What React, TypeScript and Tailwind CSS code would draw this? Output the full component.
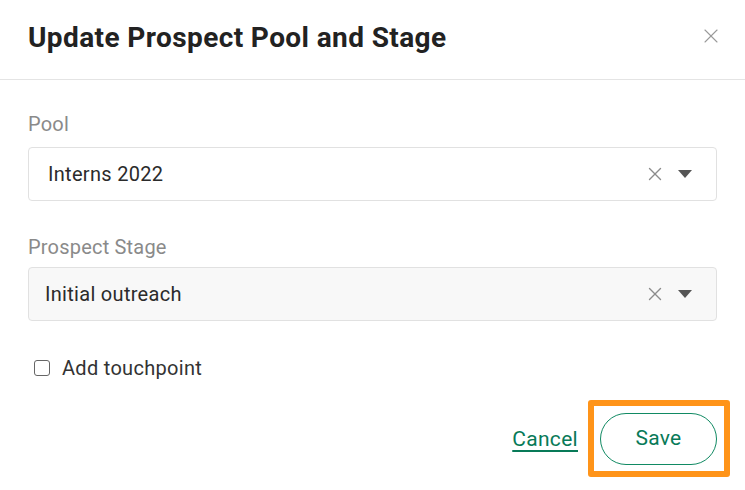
import { X } from 'lucide-react';

function SelectBox({ value, muted }: { value: string; muted?: boolean }) {
  return (
    <div
      className={`h-[54px] flex items-center rounded-[4px] border border-[#e1e1e1] ${
        muted ? 'bg-[#f8f8f8] pl-[16px]' : 'bg-white pl-[19px]'
      } pr-[24px]`}
    >
      <span className="flex-1 text-[20px] text-[#2b2b2b] tracking-[0.3px]">{value}</span>
      <X size={22} strokeWidth={1.5} className="text-[#8c8c8c] mr-[12px]" />
      <svg width="14" height="8" viewBox="0 0 14 8">
        <path d="M0 0 L14 0 L7 8 Z" fill="#555" />
      </svg>
    </div>
  );
}

export default function App() {
  return (
    <div className="w-[745px] h-[490px] bg-white overflow-hidden" style={{ fontFamily: 'Roboto, "Liberation Sans", sans-serif' }}>
      {/* header */}
      <div className="h-[80px] border-b border-[#e4e4e4] flex items-center pl-[28px] pr-[22px]">
        <h1 className="flex-1 text-[28px] font-bold text-[#222] tracking-[0.4px] pb-[3px]">
          Update Prospect Pool and Stage
        </h1>
        <X size={24} strokeWidth={1.1} className="text-[#9a9a9a] mb-[8px]" />
      </div>

      <div className="px-[28px] pr-[28px]">
        <div className="pt-[30px] text-[20px] text-[#8a8a8a] leading-[28px] tracking-[0.2px]">Pool</div>
        <div className="mt-[9px]">
          <SelectBox value="Interns 2022" />
        </div>

        <div className="mt-[32px] text-[20px] text-[#8a8a8a] leading-[28px] tracking-[0.2px]">Prospect Stage</div>
        <div className="mt-[6px]">
          <SelectBox value="Initial outreach" muted />
        </div>

        <label className="mt-[32px] flex items-center pl-[6px] gap-[12px]">
          <span className="w-[16px] h-[16px] rounded-[3px] border-[1.5px] border-[#666] bg-white" />
          <span className="text-[20px] text-[#333] tracking-[0.3px]">Add touchpoint</span>
        </label>

        <div className="mt-[17px] flex items-center justify-end mr-[-13px]">
          <a href="#" className="text-[21px] text-[#087a58] tracking-[0.3px] underline underline-offset-[4px] decoration-[2px] mr-[10px] mt-[2px]">
            Cancel
          </a>
          <div className="border-[6px] border-[#ff9419] rounded-[3px] pl-[6px] pr-[7px] pt-[7px] pb-[6px]">
            <button className="w-[117px] h-[52px] rounded-full border border-[#118a63] text-[21px] text-[#087a58] tracking-[0.3px]">
              Save
            </button>
          </div>
        </div>
      </div>
    </div>
  );
}
